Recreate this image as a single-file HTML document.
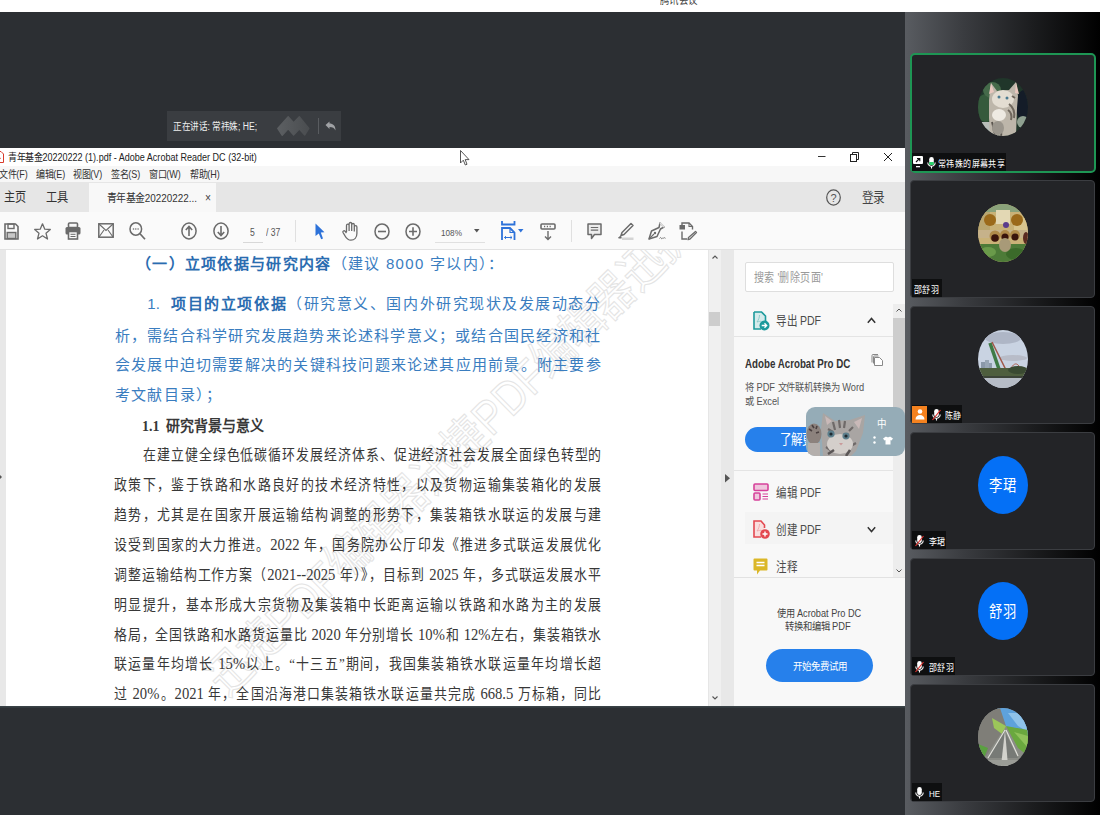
<!DOCTYPE html>
<html lang="zh-CN"><head><meta charset="utf-8">
<style>
*{margin:0;padding:0;box-sizing:border-box}
html,body{width:1101px;height:815px;overflow:hidden;background:#2c2f33;font-family:"Liberation Sans",sans-serif}
.a{position:absolute}
.t{position:absolute;white-space:nowrap;line-height:1;transform-origin:0 0}
.ln{position:absolute;white-space:nowrap;line-height:16px;text-align:justify;text-align-last:justify;transform-origin:0 0}
.dg{font-size:17px;line-height:0}
.bl{color:#3a7dbf;font-size:15px}
.bl b{color:#2a6cb0}
.bk{color:#383838;font-family:"Liberation Serif",serif;font-size:15px}
svg{position:absolute;overflow:visible}
</style></head><body>
<!-- top white bar -->
<div class="a" style="left:0;top:0;width:1101px;height:12px;background:#fff"></div>
<div class="t" style="left:660px;top:-5.5px;font-size:11px;color:#444;transform:scaleX(.86)">腾讯会议</div>

<!-- speaking badge -->
<div class="a" style="left:167px;top:111px;width:174px;height:30px;background:#3a3d41"></div>
<div class="t" style="left:173px;top:121.5px;font-size:10px;color:#eee;transform:scaleX(.86)">正在讲话: 常祎姝; HE;</div>
<svg style="left:272px;top:110px" width="40" height="30" viewBox="0 0 40 30"><defs><linearGradient id="lg" x1="0" x2="1" y1="0" y2="0"><stop offset="0" stop-color="#5c5f62"/><stop offset="1" stop-color="#4a4d50"/></linearGradient></defs><path d="M5.7 18.4 L16.2 6.7 L21.6 12.7 L27.3 6.7 L36.9 18.4 L32.7 25.1 L27.3 19.1 L21.6 25.1 L16.2 18.8 L10.2 25.4z" fill="url(#lg)" stroke="url(#lg)" stroke-width="1.2" stroke-linejoin="round"/></svg>
<div class="a" style="left:318px;top:118px;width:1px;height:16px;background:#595c60"></div>
<svg style="left:325px;top:121px" width="11" height="10" viewBox="0 0 11 10"><path d="M0.5 4L4.5 0.5V2.5C8 2.5 10.5 4.5 10.5 9.5C9.5 7 7.5 6 4.5 6V8z" fill="#a0a2a5"/></svg>

<!-- ACROBAT WINDOW -->
<div id="acro" class="a" style="left:0;top:148px;width:905px;height:558px;background:#fff;overflow:hidden">
<!-- title bar (y 148-166) -->
<div class="a" style="left:0;top:0;width:905px;height:18px;background:#fff"></div>
<svg style="left:-6px;top:3px" width="10" height="12" viewBox="0 0 10 12"><path d="M1 0.5h6l2.5 2.5v8.5h-8.5z" fill="#fff" stroke="#d83b2b" stroke-width="1"/><path d="M3 8c1-2 2-4 2-6M3 8c2-.5 3-1 4-.5" stroke="#d83b2b" stroke-width=".8" fill="none"/></svg>
<div class="t" style="left:8px;top:4px;font-size:10.5px;color:#222;transform:scaleX(.86)">青年基金20220222 (1).pdf - Adobe Acrobat Reader DC (32-bit)</div>
<svg style="left:818px;top:8px" width="8" height="2"><rect x="0" y="0" width="7.5" height="1" fill="#333"/></svg>
<svg style="left:850px;top:4px" width="9" height="10" viewBox="0 0 9 10"><rect x="0.5" y="2.5" width="6" height="7" fill="none" stroke="#222"/><path d="M2.5 2.5V0.5h6v7h-2" fill="none" stroke="#222"/></svg>
<svg style="left:883.5px;top:4.5px" width="8" height="8" viewBox="0 0 8 8"><path d="M0 0L8 8M8 0L0 8" stroke="#222" stroke-width="1"/></svg>
<!-- menu bar (166-182) -->
<div class="a" style="left:0;top:18px;width:905px;height:16px;background:#f7f7f7"></div>
<div class="t" style="left:-1px;top:21px;font-size:10.5px;color:#333;transform:scaleX(.86)">文件(F)</div>
<div class="t" style="left:36px;top:21px;font-size:10.5px;color:#333;transform:scaleX(.86)">编辑(E)</div>
<div class="t" style="left:73px;top:21px;font-size:10.5px;color:#333;transform:scaleX(.86)">视图(V)</div>
<div class="t" style="left:111px;top:21px;font-size:10.5px;color:#333;transform:scaleX(.86)">签名(S)</div>
<div class="t" style="left:149px;top:21px;font-size:10.5px;color:#333;transform:scaleX(.86)">窗口(W)</div>
<div class="t" style="left:190px;top:21px;font-size:10.5px;color:#333;transform:scaleX(.86)">帮助(H)</div>
<!-- tab bar (182-212) -->
<div class="a" style="left:0;top:34px;width:905px;height:30px;background:#e6e6e6"></div>
<div class="a" style="left:89px;top:35px;width:127px;height:29px;background:#f8f8f8"></div>
<div class="t" style="left:4px;top:41.5px;font-size:13px;color:#333;transform:scaleX(.86)">主页</div>
<div class="t" style="left:46px;top:41.5px;font-size:13px;color:#333;transform:scaleX(.86)">工具</div>
<div class="t" style="left:107px;top:44.5px;font-size:11.5px;color:#333;transform:scaleX(.86)">青年基金20220222...</div>
<div class="t" style="left:205px;top:44px;font-size:12px;color:#444;transform:scaleX(.86)">×</div>
<svg style="left:826px;top:41px" width="15" height="17" viewBox="0 0 15 17"><ellipse cx="7.5" cy="8.5" rx="6.8" ry="7.6" fill="none" stroke="#555" stroke-width="1.2"/><text x="7.5" y="12.5" font-size="11" text-anchor="middle" fill="#555" font-family="Liberation Sans">?</text></svg>
<div class="t" style="left:862px;top:43px;font-size:13.5px;color:#444;transform:scaleX(.86)">登录</div>
<!-- toolbar (212-250) -->
<div class="a" style="left:0;top:64px;width:905px;height:38px;background:#fafafa;border-bottom:1px solid #e2e2e2"></div>


<!-- doc area (y 250-706) -->
<div class="a" style="left:0;top:102px;width:6px;height:456px;background:#e8e8e8"></div>
<svg style="left:-1px;top:326px" width="4" height="6"><path d="M0 0L3 3L0 6z" fill="#555"/></svg>
<div class="a" style="left:6px;top:102px;width:702px;height:456px;background:#fff"></div>
<div class="a" style="left:708px;top:102px;width:12.5px;height:456px;background:#f0f0f0;border-left:1px solid #e6e6e6"></div>
<div class="a" style="left:709px;top:164px;width:11px;height:13.5px;background:#cdcdcd"></div>
<svg style="left:711.5px;top:107px" width="6" height="4"><path d="M0.5 3.5L3 1L5.5 3.5" fill="none" stroke="#555" stroke-width="1.1"/></svg>
<svg style="left:711.5px;top:548px" width="6" height="4"><path d="M0.5 0.5L3 3L5.5 0.5" fill="none" stroke="#555" stroke-width="1.1"/></svg>
<div class="a" style="left:720.5px;top:102px;width:13.5px;height:456px;background:#e8e8e8"></div>
<svg style="left:724.5px;top:325.5px" width="6" height="9"><path d="M0 0L5 4.3L0 8.6z" fill="#555"/></svg>
<div class="a" style="left:6px;top:102px;width:702px;height:456px;overflow:hidden"><div class="t" style="left:193px;top:420px;font-size:48px;color:transparent;-webkit-text-stroke:1.1px #e4e4e4;transform:rotate(-44.6deg) scaleX(.86);transform-origin:0 0">迅捷PDF编辑器迅捷PDF编辑器迅捷</div></div>
<div class="ln bl" style="left:136px;top:108.0px;text-align:left;text-align-last:left;letter-spacing:1.3px"><b>（一）立项依据与研究内容</b>（建议 8000 字以内）：</div>
<div class="ln bl" style="left:147.3px;top:148.0px;width:452.7px;">1.&nbsp; <b>项目的立项依据</b>（研究意义、国内外研究现状及发展动态分</div>
<div class="ln bl" style="left:114.8px;top:179.5px;width:485.2px;">析，需结合科学研究发展趋势来论述科学意义；或结合国民经济和社</div>
<div class="ln bl" style="left:114.8px;top:209.0px;width:485.8px;">会发展中迫切需要解决的关键科技问题来论述其应用前景。附主要参</div>
<div class="ln bl" style="left:114.8px;top:239.4px;text-align:left;text-align-last:left;letter-spacing:1.3px">考文献目录）；</div>
<div class="ln bk" style="left:142.2px;top:269.9px;text-align:left;text-align-last:left;font-weight:bold;transform:scaleX(.93)">1.1&nbsp; 研究背景与意义</div>
<div class="ln bk" style="left:142.6px;top:299.2px;width:533.0px;transform:scaleX(0.86);">在建立健全绿色低碳循环发展经济体系、促进经济社会发展全面绿色转型的</div>
<div class="ln bk" style="left:114px;top:329.1px;width:566.3px;transform:scaleX(0.86);">政策下，鉴于铁路和水路良好的技术经济特性，以及货物运输集装箱化的发展</div>
<div class="ln bk" style="left:114px;top:359.0px;width:566.3px;transform:scaleX(0.86);">趋势，尤其是在国家开展运输结构调整的形势下，集装箱铁水联运的发展与建</div>
<div class="ln bk" style="left:114px;top:388.9px;width:566.3px;transform:scaleX(0.86);">设受到国家的大力推进。<span class="dg">2022</span> 年，国务院办公厅印发《推进多式联运发展优化</div>
<div class="ln bk" style="left:114px;top:418.8px;width:566.3px;transform:scaleX(0.86);">调整运输结构工作方案（<span class="dg">2021--2025</span> 年）》，目标到 <span class="dg">2025</span> 年，多式联运发展水平</div>
<div class="ln bk" style="left:114px;top:448.6px;width:566.3px;transform:scaleX(0.86);">明显提升，基本形成大宗货物及集装箱中长距离运输以铁路和水路为主的发展</div>
<div class="ln bk" style="left:114px;top:478.5px;width:566.3px;transform:scaleX(0.86);">格局，全国铁路和水路货运量比 <span class="dg">2020</span> 年分别增长 <span class="dg">10%</span>和 <span class="dg">12%</span>左右，集装箱铁水</div>
<div class="ln bk" style="left:114px;top:508.4px;width:566.3px;transform:scaleX(0.86);">联运量年均增长 <span class="dg">15%</span>以上。“十三五”期间，我国集装箱铁水联运量年均增长超</div>
<div class="ln bk" style="left:114px;top:538.3px;width:566.3px;transform:scaleX(0.86);">过 <span class="dg">20%</span>。<span class="dg">2021</span> 年，全国沿海港口集装箱铁水联运量共完成 <span class="dg">668.5</span> 万标箱，同比</div>

<!-- right pane -->
<div class="a" style="left:734px;top:102px;width:171px;height:456px;background:#f8f8f8"></div>
<div class="a" style="left:744.5px;top:114.4px;width:149.5px;height:29.5px;background:#fff;border:1px solid #dedede;border-radius:2px"></div>
<div class="t" style="left:754px;top:123.5px;font-size:12.5px;color:#9a9a9a;transform:scaleX(.80)">搜索 '删除页面'</div>
<svg style="left:752.5px;top:162.5px" width="17" height="20" viewBox="0 0 17 20"><path d="M1 1h7.5l4 4v8L8 18H1z" fill="#d5ebeb"/><path d="M1 1h7.5l4 4v5.5" fill="none" stroke="#1d9a9c" stroke-width="1.6"/><path d="M1 1v17h7" fill="none" stroke="#1d9a9c" stroke-width="1.6"/><path d="M4 11c1.5-2 2.5-4.5 2.5-7M4 11c2-.5 3.5-1 4.5-.5" fill="none" stroke="#7cc4c4" stroke-width=".8"/><circle cx="11.5" cy="14.5" r="5" fill="#1d9a9c"/><path d="M8.7 14.5h4.5M11.5 12.3l2.2 2.2l-2.2 2.2" fill="none" stroke="#fff" stroke-width="1.3"/></svg>
<div class="t" style="left:776px;top:165.5px;font-size:13px;color:#4b4b4b;transform:scaleX(.81)">导出 PDF</div>
<svg style="left:867px;top:168.5px" width="9" height="7"><path d="M0.8 5.8L4.5 1.5L8.2 5.8" fill="none" stroke="#333" stroke-width="1.5"/></svg>
<div class="a" style="left:734px;top:188.0px;width:159px;height:1px;background:#e4e4e4"></div>
<div class="a" style="left:893px;top:156.0px;width:11.5px;height:273px;background:#ededed"></div>
<div class="a" style="left:893px;top:170.0px;width:11.5px;height:112px;background:#cdcdcd"></div>
<svg style="left:896px;top:160.0px" width="6" height="4"><path d="M0.5 3.5L3 1L5.5 3.5" fill="none" stroke="#555" stroke-width="1"/></svg>
<svg style="left:896px;top:420.5px" width="6" height="4"><path d="M0.5 0.5L3 3L5.5 0.5" fill="none" stroke="#555" stroke-width="1"/></svg>
<div class="t" style="left:745px;top:210.0px;font-size:12.5px;font-weight:bold;color:#333;transform:scaleX(.78)">Adobe Acrobat Pro DC</div>
<svg style="left:871px;top:206.0px" width="12" height="12" viewBox="0 0 12 12"><path d="M3.5 3.5h5l3 3v5h-8z" fill="#fff" stroke="#888" stroke-width="1"/><path d="M1 8.5V1.5a1 1 0 0 1 1-1h5" fill="none" stroke="#888" stroke-width="1"/><path d="M2.5 9.5V3a1 1 0 0 1 1-1h4" fill="none" stroke="#888" stroke-width="1"/></svg>
<div class="t" style="left:745px;top:234.0px;font-size:10.5px;color:#555;transform:scaleX(.885)">将 PDF 文件联机转换为 Word</div>
<div class="t" style="left:745px;top:248.0px;font-size:10.5px;color:#555;transform:scaleX(.885)">或 Excel</div>
<div class="a" style="left:744.5px;top:279.2px;width:122px;height:24.7px;background:#2680eb;border-radius:13px"></div>
<div class="t" style="left:779.5px;top:285.0px;font-size:13.5px;color:#fff;transform:scaleX(.86)">了解更多</div>
<div class="a" style="left:734px;top:322.0px;width:159px;height:1px;background:#e4e4e4"></div>
<svg style="left:752.5px;top:334.8px" width="16" height="18" viewBox="0 0 16 18"><rect x="1" y="1" width="14" height="6.5" rx="1" fill="#efc6dd" stroke="#d6419a" stroke-width="1.6"/><rect x="1" y="10" width="6" height="7" rx="1" fill="#efc6dd" stroke="#d6419a" stroke-width="1.6"/><path d="M9.5 11h5.5M9.5 13.5h5.5M9.5 16h5.5" stroke="#d6419a" stroke-width="1"/></svg>
<div class="t" style="left:776px;top:338.0px;font-size:13px;color:#4b4b4b;transform:scaleX(.81)">编辑 PDF</div>
<div class="a" style="left:745px;top:364.0px;width:148px;height:31.5px;background:#f4f4f4"></div>
<svg style="left:752.5px;top:371.5px" width="17" height="19" viewBox="0 0 17 19"><path d="M11.5 8V5L8 1H1v16h7z" fill="#f9dede"/><path d="M11.5 8V5L8 1H1v16h7" fill="none" stroke="#e34850" stroke-width="1.6"/><path d="M4 11c1.5-2 2.5-4.5 2.5-7M4 11c2-.5 3.5-1 4.5-.5" fill="none" stroke="#f0a0a5" stroke-width=".8"/><circle cx="12" cy="14" r="4.8" fill="#e34850"/><path d="M9.5 14h5M12 11.5v5" stroke="#fff" stroke-width="1.4"/></svg>
<div class="t" style="left:776px;top:375.0px;font-size:13px;color:#4b4b4b;transform:scaleX(.81)">创建 PDF</div>
<svg style="left:867px;top:378.0px" width="9" height="7"><path d="M0.8 1.2L4.5 5.5L8.2 1.2" fill="none" stroke="#333" stroke-width="1.5"/></svg>
<svg style="left:753px;top:409.8px" width="15" height="17" viewBox="0 0 15 17"><path d="M1.5 0.5h12a1 1 0 0 1 1 1v10a1 1 0 0 1-1 1H7L4 16.5V12.5H1.5a1 1 0 0 1-1-1v-10a1 1 0 0 1 1-1z" fill="#dbb728"/><path d="M3.5 4.5h8M3.5 7.5h8" stroke="#fff" stroke-width="1.4"/></svg>
<div class="t" style="left:776px;top:411.5px;font-size:13px;color:#4b4b4b;transform:scaleX(.81)">注释</div>
<div class="a" style="left:734px;top:429.0px;width:171px;height:1px;background:#e2e2e2"></div>
<div class="t" style="left:777px;top:460.0px;font-size:10.5px;color:#444;transform:scaleX(0.873)">使用 Acrobat Pro DC</div>
<div class="t" style="left:785px;top:473.0px;font-size:10.5px;color:#444;transform:scaleX(0.889)">转换和编辑 PDF</div>
<div class="a" style="left:766px;top:500.8px;width:107px;height:33px;background:#2680eb;border-radius:17px"></div>
<div class="t" style="left:792.5px;top:512.5px;font-size:10.5px;color:#fff;transform:scaleX(0.904)">开始免费试用</div>
<!-- IME widget -->
<div class="a" style="left:806px;top:259px;width:98.5px;height:49px;background:#95acb7;border-radius:9px;overflow:hidden">
<svg style="left:0;top:0" width="98" height="49" viewBox="0 0 98 49">
<path d="M17 49L15 22L17 6L29 14L44 13L59 8L57 26L50 44L45 49z" fill="#a9a5a3"/>
<path d="M19 9L21 18L26 14z M56 11L53 22L48 15z" fill="#c9b9b8"/>
<path d="M27 15l2 8M33 13l1 8M39 14l-1 7M22 22l5 3M47 20l-4 4M20 40l6 4M50 36l-5 3" stroke="#6f6a69" stroke-width="2.2" fill="none"/>
<ellipse cx="34" cy="37" rx="13" ry="10" fill="#d4cfcb"/>
<ellipse cx="25" cy="27" rx="3.6" ry="3.4" fill="#5d7f8c"/><ellipse cx="40" cy="29" rx="3.6" ry="3.4" fill="#5d7f8c"/>
<circle cx="25" cy="27" r="1.6" fill="#1e2a30"/><circle cx="40" cy="29" r="1.6" fill="#1e2a30"/>
<path d="M33 36l4 0l-2 2.5z" fill="#c99a9a"/>
<path d="M22 47l6-4M40 49l4-6" stroke="#5a5656" stroke-width="2.5"/>
<ellipse cx="8" cy="27" rx="7.5" ry="10.5" fill="#8c827d"/>
<path d="M3 22l3 2M6 18l2 3M11 19l-1 3M13 25l-3 1" stroke="#4a4040" stroke-width="1.6"/>
<rect x="2" y="36" width="12" height="13" fill="#b4afac"/>
</svg>
</div>
<div class="t" style="left:876.5px;top:271.0px;font-size:11px;color:#fff;transform:scaleX(.86)">中</div>
<svg style="left:873px;top:288.0px" width="4" height="9"><circle cx="1.5" cy="1.5" r="1.2" fill="#fff"/><circle cx="1.5" cy="6.5" r="1.2" fill="#fff"/></svg>
<svg style="left:883px;top:288.0px" width="10" height="9" viewBox="0 0 10 9"><path d="M3 0.5L0 2.5l1.5 2L2.5 4v4.5h5V4l1 .5L10 2.5L7 0.5C6.5 1.5 3.5 1.5 3 .5z" fill="#fff"/></svg>
<!-- cursor -->
<svg style="left:459.8px;top:2px" width="10" height="16" viewBox="0 0 10 16"><path d="M0.5 0.5V13L3.3 10.2L5.3 15L7 14.3L5.2 9.6H9z" fill="#fff" stroke="#444" stroke-width=".9" stroke-linejoin="round"/></svg>
<!-- toolbar icons -->
<svg style="left:4px;top:74.5px" width="15" height="17" viewBox="0 0 15 17"><path d="M1 1h10.5l2.5 2.5v12.5h-13z" fill="none" stroke="#6b6b6b" stroke-width="1.6"/><rect x="4" y="1" width="6" height="4.5" fill="none" stroke="#6b6b6b" stroke-width="1.4"/><rect x="3.2" y="9.5" width="8.6" height="6" fill="#c8c8c8" stroke="#6b6b6b" stroke-width="1.4"/></svg>
<svg style="left:34px;top:74.5px" width="17" height="17" viewBox="0 0 17 17"><path d="M8.5 0.8L10.8 6.2L16.3 6.5L12 10.2L13.5 16L8.5 12.8L3.5 16L5 10.2L0.7 6.5L6.2 6.2Z" fill="none" stroke="#6b6b6b" stroke-width="1.3" stroke-linejoin="round"/></svg>
<svg style="left:65px;top:74px" width="16" height="18" viewBox="0 0 16 18"><rect x="3.5" y="1" width="9" height="4.5" rx="1" fill="none" stroke="#6b6b6b" stroke-width="1.6"/><rect x="0.5" y="5" width="15" height="7.5" rx="1.5" fill="#6b6b6b"/><rect x="3.5" y="9.5" width="9" height="7.5" fill="#fafafa" stroke="#6b6b6b" stroke-width="1.6"/><path d="M5.5 12.3h5M5.5 14.5h5" stroke="#6b6b6b" stroke-width="1"/></svg>
<svg style="left:97.5px;top:75px" width="16" height="15" viewBox="0 0 16 15"><rect x="0.8" y="0.8" width="14.4" height="13.4" fill="none" stroke="#6b6b6b" stroke-width="1.5"/><path d="M1 1L8 7.5L15 1M1 14L6 7M15 14L10 7" fill="none" stroke="#6b6b6b" stroke-width="1.1"/></svg>
<svg style="left:128.5px;top:74px" width="17" height="18" viewBox="0 0 17 18"><ellipse cx="6.8" cy="7" rx="5.8" ry="6.2" fill="none" stroke="#6b6b6b" stroke-width="1.5"/><path d="M11 11.8L16 17.3" stroke="#6b6b6b" stroke-width="1.7"/><circle cx="4.5" cy="7" r=".8" fill="#6b6b6b"/><circle cx="6.8" cy="7" r=".8" fill="#6b6b6b"/><circle cx="9.1" cy="7" r=".8" fill="#6b6b6b"/></svg>
<svg style="left:181px;top:74px" width="16" height="18" viewBox="0 0 16 18"><ellipse cx="8" cy="9" rx="7.1" ry="7.9" fill="none" stroke="#6b6b6b" stroke-width="1.5"/><path d="M8 14V4.5M4.8 8L8 4.5L11.2 8" fill="none" stroke="#6b6b6b" stroke-width="1.6"/></svg>
<svg style="left:212.5px;top:74px" width="16" height="18" viewBox="0 0 16 18"><ellipse cx="8" cy="9" rx="7.1" ry="7.9" fill="none" stroke="#6b6b6b" stroke-width="1.5"/><path d="M8 4V13.5M4.8 10L8 13.5L11.2 10" fill="none" stroke="#6b6b6b" stroke-width="1.6"/></svg>
<div class="t" style="left:250px;top:79.5px;font-size:10px;color:#555;transform:scaleX(.86)">5</div>
<div class="a" style="left:243px;top:94px;width:20px;height:1px;background:#d8d8d8"></div>
<div class="t" style="left:266px;top:79.5px;font-size:10px;color:#555;transform:scaleX(.86)">/ 37</div>
<div class="a" style="left:295px;top:72px;width:1px;height:22px;background:#e0e0e0"></div>
<svg style="left:315px;top:74.5px" width="10" height="17" viewBox="0 0 10 17"><path d="M0.5 0.5L9.5 9.2L5.8 9.5L8 15.5L6.2 16.3L3.8 10.5L0.5 13z" fill="#2d72d9"/></svg>
<svg style="left:342px;top:74px" width="17" height="19" viewBox="0 0 17 19"><path d="M4.5 10V3.5a1.3 1.3 0 0 1 2.6 0V9M7.1 9V1.8a1.3 1.3 0 0 1 2.6 0V9M9.7 9V2.8a1.3 1.3 0 0 1 2.6 0V9.5M12.3 9.5V5a1.3 1.3 0 0 1 2.6 0v6.5c0 4-2.5 6.7-6 6.7c-3 0-4.5-1.8-6-4.5L1 10.5a1.2 1.2 0 0 1 2-1.3L4.5 11" fill="none" stroke="#6b6b6b" stroke-width="1.3" stroke-linejoin="round"/></svg>
<svg style="left:373.5px;top:74.5px" width="16" height="17" viewBox="0 0 16 17"><ellipse cx="8" cy="8.5" rx="7" ry="7.6" fill="none" stroke="#6b6b6b" stroke-width="1.5"/><path d="M4 8.5h8" stroke="#6b6b6b" stroke-width="1.6"/></svg>
<svg style="left:405px;top:74.5px" width="16" height="17" viewBox="0 0 16 17"><ellipse cx="8" cy="8.5" rx="7" ry="7.6" fill="none" stroke="#6b6b6b" stroke-width="1.5"/><path d="M4 8.5h8M8 4.3v8.4" stroke="#6b6b6b" stroke-width="1.6"/></svg>
<div class="t" style="left:441px;top:80px;font-size:9.5px;color:#555;transform:scaleX(.86)">108%</div>
<svg style="left:474px;top:81px" width="6" height="4"><path d="M0 0h5.5L2.75 3.5z" fill="#555"/></svg>
<div class="a" style="left:435px;top:94px;width:50px;height:1px;background:#e0e0e0"></div>
<svg style="left:500.5px;top:73px" width="15" height="20" viewBox="0 0 15 20"><path d="M1 0v3.5h12.5V0" fill="none" stroke="#2d72d9" stroke-width="1.8"/><path d="M1 19V7h8l4.5 4.5V19" fill="none" stroke="#2d72d9" stroke-width="1.8"/><path d="M9 7v4.5h4.5" fill="none" stroke="#2d72d9" stroke-width="1.2"/><path d="M3.5 16.5h7.5M3.5 16.5l1.5-1.3M3.5 16.5l1.5 1.3M11 16.5l-1.5-1.3M11 16.5l-1.5 1.3" stroke="#2d72d9" stroke-width="1"/></svg>
<svg style="left:518px;top:81px" width="6" height="4"><path d="M0 0h5.5L2.75 3.5z" fill="#2d72d9"/></svg>
<svg style="left:539.5px;top:74.5px" width="16" height="18" viewBox="0 0 16 18"><rect x="1" y="1" width="14" height="5" rx="1" fill="none" stroke="#6b6b6b" stroke-width="1.6"/><path d="M4 3.5h1.2M6.8 3.5h1.2M9.6 3.5h1.2" stroke="#6b6b6b" stroke-width="1.4"/><path d="M8 8v8.5M5 13.5L8 16.5L11 13.5" fill="none" stroke="#6b6b6b" stroke-width="1.4"/></svg>
<div class="a" style="left:570.5px;top:72px;width:1px;height:22px;background:#e0e0e0"></div>
<svg style="left:586.5px;top:75px" width="15" height="17" viewBox="0 0 15 17"><path d="M1 1h13v10.5H7.5L4.5 15.5V11.5H1z" fill="#ececec" stroke="#6b6b6b" stroke-width="1.5" stroke-linejoin="round"/><path d="M3.8 4.5h7.4M3.8 7.2h7.4" stroke="#6b6b6b" stroke-width="1.2"/></svg>
<svg style="left:617px;top:74px" width="17" height="18" viewBox="0 0 17 18"><path d="M14 1.5l2 2L7 12.5l-3 1l1-3z" fill="none" stroke="#6b6b6b" stroke-width="1.5" stroke-linejoin="round"/><path d="M4 13.5l-2.5 2.5h3" fill="#6b6b6b" stroke="#6b6b6b" stroke-width="1"/><rect x="5" y="15.5" width="11.5" height="2.5" fill="#d4d4d4"/></svg>
<svg style="left:648px;top:74px" width="18" height="18" viewBox="0 0 18 18"><path d="M12 1l4 4l-3.5 2L9 14.5L1 17L3.5 9L11 5.5z" fill="none" stroke="#6b6b6b" stroke-width="1.5" stroke-linejoin="round"/><path d="M1 17l5-5" stroke="#6b6b6b" stroke-width="1.1"/><circle cx="7" cy="11" r="1.2" fill="#6b6b6b"/><path d="M11.5 16.5c1-1.5 1.5-1 2 0c.5 1 1-.5 1.5-1M15.5 16.5c.5-1 1-1 2-.2" fill="none" stroke="#6b6b6b" stroke-width=".9"/><path d="M12 1l4 4" stroke="#dcdcdc" stroke-width="1.8"/></svg>
<svg style="left:679px;top:74px" width="18" height="18" viewBox="0 0 18 18"><rect x="0.5" y="3" width="5.5" height="4.5" fill="#6b6b6b"/><path d="M3 3V1h7l3.5 3.5v3" fill="none" stroke="#6b6b6b" stroke-width="1.4"/><path d="M10 1v3.5h3.5" fill="none" stroke="#6b6b6b" stroke-width="1.1"/><path d="M3 9.5v7.5h5" fill="none" stroke="#6b6b6b" stroke-width="1.4"/><path d="M16.5 9.5l1 1L11 17l-2 .5l.5-2z" fill="none" stroke="#6b6b6b" stroke-width="1.3" stroke-linejoin="round"/></svg>
</div>

<div class="a" style="left:0;top:706px;width:905px;height:2px;background:linear-gradient(#3d464b,#30363a)"></div>
<!-- RIGHT PANEL -->
<div id="panel" class="a" style="left:905px;top:12px;width:195px;height:803px;background:linear-gradient(90deg,#595c61 0%,#3a3c40 30%,#1c1d1f 65%,#000 100%)"></div>
<!-- tiles -->
<div class="a" style="left:909.5px;top:53px;width:186px;height:119.5px;background:#232427;border:2px solid #1e9654;border-radius:5px"></div>
<div class="a" style="left:977.5px;top:78.3px;width:50px;height:58px;border-radius:50%;overflow:hidden"><svg style="left:0;top:0" width="50" height="58" viewBox="0 0 50 58" preserveAspectRatio="none"><rect width="50" height="58" fill="#20362a"/><ellipse cx="8" cy="30" rx="10" ry="14" fill="#355a3c"/><ellipse cx="14" cy="12" rx="9" ry="8" fill="#456a4a"/><ellipse cx="46" cy="28" rx="8" ry="16" fill="#141c28"/><ellipse cx="45" cy="44" rx="6" ry="6" fill="#8fa090"/><rect x="0" y="44" width="20" height="14" fill="#b9bdba"/>
<path d="M13 5L19 13L31 12L38 4L40 18L39 30L38 58H12L11 40L11 22z" fill="#bdb6aa"/><ellipse cx="25" cy="21" rx="11" ry="9" fill="#e3ddd2"/><path d="M31 26c4 3 6 8 5 14M30 32c3 2 4 6 3 10M34 18l3 2" stroke="#6e665c" stroke-width="2" fill="none"/>
<ellipse cx="21" cy="37" rx="7" ry="6" fill="#eeeae2"/><path d="M14 44c2 6 1 10 4 14M22 46c0 5 2 8 1 12" stroke="#5a554e" stroke-width="2" fill="none"/><ellipse cx="20" cy="50" rx="6" ry="7" fill="#9a958c"/><circle cx="21" cy="19" r="1.5" fill="#4a7a90"/><circle cx="29" cy="20" r="1.5" fill="#4a7a90"/><path d="M13 5l3 9l-5 2z M38 4l-1 11l4 1z" fill="#e9c8bf"/></svg></div>
<div class="a" style="left:912px;top:153px;width:94px;height:18px;background:#0e0f10"></div>
<svg style="left:912.8px;top:156px" width="10" height="12" viewBox="0 0 10 12"><rect x="0" y="0" width="10" height="8" rx="1" fill="#fff"/><path d="M3 6l3.5-3.5M4 2.5h2.8v2.8" stroke="#111" stroke-width="1.1" fill="none"/><rect x="3" y="10" width="4" height="1.3" fill="#fff"/></svg>
<svg style="left:927px;top:156.5px" width="9" height="12" viewBox="0 0 9 12"><rect x="2.2" y="0" width="4.6" height="8" rx="2.3" fill="#fff"/><rect x="2.2" y="5" width="4.6" height="3" fill="#2bd26b"/><path d="M0.8 5.5a3.7 3.7 0 0 0 7.4 0M4.5 9.3V11.5" stroke="#fff" stroke-width="1.1" fill="none"/></svg>
<div class="t" style="left:938px;top:158.5px;font-size:9.5px;color:#fff;transform:scaleX(.84)">常祎姝的屏幕共享</div>
<div class="a" style="left:910px;top:180px;width:185px;height:118px;background:#232427;border:1px solid #3b3d41;border-radius:4px"></div>
<div class="a" style="left:977.5px;top:204.3px;width:50px;height:58px;border-radius:50%;overflow:hidden"><svg style="left:0;top:0" width="50" height="58" viewBox="0 0 50 58" preserveAspectRatio="none"><rect width="50" height="58" fill="#c9b277"/><rect width="50" height="8" fill="#8aa27a"/><rect x="0" y="8" width="12" height="20" fill="#b9a670"/><rect x="18" y="6" width="14" height="14" fill="#e3d8b4"/><rect x="36" y="14" width="14" height="20" fill="#d8c58e"/><circle cx="12" cy="16" r="6" fill="#9b6a1a"/><circle cx="39" cy="16" r="6" fill="#9b6a1a"/><circle cx="28" cy="21" r="3" fill="#5a3c8c"/>
<rect x="0" y="26" width="50" height="8" fill="#c6b28a"/><circle cx="17" cy="32" r="5.5" fill="#b08a4a"/><circle cx="27" cy="31" r="5" fill="#b08a4a"/><circle cx="37" cy="31" r="5" fill="#b08a4a"/><circle cx="17" cy="34" r="3.8" fill="#3a140c"/><circle cx="27" cy="33" r="3.5" fill="#3a140c"/><circle cx="37" cy="33" r="3.5" fill="#3a140c"/>
<rect x="0" y="40" width="50" height="18" fill="#4d7b38"/><ellipse cx="10" cy="48" rx="8" ry="5" fill="#6a9a4a"/><ellipse cx="38" cy="50" rx="10" ry="6" fill="#3b6a2a"/><ellipse cx="27" cy="41" rx="6" ry="7" fill="#a89a78"/><ellipse cx="48" cy="34" rx="3" ry="6" fill="#5a2a20"/></svg></div>
<div class="a" style="left:912px;top:279px;width:29.7px;height:18px;background:#0e0f10"></div>
<div class="t" style="left:914px;top:284.5px;font-size:9.5px;color:#fff;transform:scaleX(.84)">邵舒羽</div>
<div class="a" style="left:910px;top:306px;width:185px;height:118px;background:#232427;border:1px solid #3b3d41;border-radius:4px"></div>
<div class="a" style="left:977.5px;top:330.3px;width:50px;height:58px;border-radius:50%;overflow:hidden"><svg style="left:0;top:0" width="50" height="58" viewBox="0 0 50 58" preserveAspectRatio="none"><rect width="50" height="58" fill="#c9d3e2"/><ellipse cx="25" cy="8" rx="18" ry="6" fill="#aeb6c6"/><ellipse cx="35" cy="28" rx="14" ry="3" fill="#b8bcc8"/><rect x="3" y="32" width="4" height="8" fill="#8a98a8"/><rect x="7" y="30" width="4" height="10" fill="#98a6b4"/><rect x="11" y="33" width="3" height="7" fill="#8d9bab"/>
<path d="M12 13L23 45" stroke="#3f7a45" stroke-width="3.5"/><path d="M14 12L29 42" stroke="#a0584a" stroke-width="1.5"/><path d="M32 40c3-6 6-8 9-4M35 38l2 4" stroke="#b06050" stroke-width="1" fill="none"/>
<rect x="0" y="38" width="50" height="10" fill="#4e5e3e"/><ellipse cx="40" cy="40" rx="10" ry="4" fill="#3a4a32"/><rect x="0" y="47" width="50" height="11" fill="#b6bcc6"/><rect x="0" y="46" width="50" height="2" fill="#3c4438"/></svg></div>
<div class="a" style="left:912px;top:405px;width:50.4px;height:18px;background:#0e0f10"></div>
<div class="a" style="left:912.3px;top:405.5px;width:14.7px;height:17px;background:#f5821f"></div>
<svg style="left:913.5px;top:408px" width="12" height="12" viewBox="0 0 12 12"><circle cx="6" cy="3.5" r="2.3" fill="#fff"/><path d="M1.5 11.5c0-3 2-4.5 4.5-4.5s4.5 1.5 4.5 4.5z" fill="#fff"/></svg>
<svg style="left:931.8px;top:408.5px" width="9" height="12" viewBox="0 0 9 12"><rect x="2.2" y="0" width="4.6" height="8" rx="2.3" fill="#fff"/><path d="M0.8 5.5a3.7 3.7 0 0 0 7.4 0M4.5 9.3V11.5" stroke="#fff" stroke-width="1.1" fill="none"/><path d="M0.5 11L8.5 1" stroke="#e0302c" stroke-width="1.2"/></svg>
<div class="t" style="left:944.5px;top:410.5px;font-size:9.5px;color:#fff;transform:scaleX(.84)">陈静</div>
<div class="a" style="left:910px;top:432px;width:185px;height:118px;background:#232427;border:1px solid #3b3d41;border-radius:4px"></div>
<div class="a" style="left:977.5px;top:456.3px;width:50px;height:58px;border-radius:50%;background:#0470f6"></div>
<div class="t" style="left:1004.5px;top:478.4px;font-size:15.5px;color:#fff;transform:translateX(-50%) scaleX(.86);transform-origin:0 0">李珺</div>
<div class="a" style="left:912px;top:531px;width:34.2px;height:18px;background:#0e0f10"></div>
<svg style="left:914.5px;top:534.5px" width="9" height="12" viewBox="0 0 9 12"><rect x="2.2" y="0" width="4.6" height="8" rx="2.3" fill="#fff"/><path d="M0.8 5.5a3.7 3.7 0 0 0 7.4 0M4.5 9.3V11.5" stroke="#fff" stroke-width="1.1" fill="none"/><path d="M0.5 11L8.5 1" stroke="#e0302c" stroke-width="1.2"/></svg>
<div class="t" style="left:929px;top:536.5px;font-size:9.5px;color:#fff;transform:scaleX(.84)">李珺</div>
<div class="a" style="left:910px;top:558px;width:185px;height:118px;background:#232427;border:1px solid #3b3d41;border-radius:4px"></div>
<div class="a" style="left:977.5px;top:582.3px;width:50px;height:58px;border-radius:50%;background:#0470f6"></div>
<div class="t" style="left:1004.5px;top:604.4px;font-size:15.5px;color:#fff;transform:translateX(-50%) scaleX(.86);transform-origin:0 0">舒羽</div>
<div class="a" style="left:912px;top:657px;width:42.5px;height:18px;background:#0e0f10"></div>
<svg style="left:914.5px;top:660.5px" width="9" height="12" viewBox="0 0 9 12"><rect x="2.2" y="0" width="4.6" height="8" rx="2.3" fill="#fff"/><path d="M0.8 5.5a3.7 3.7 0 0 0 7.4 0M4.5 9.3V11.5" stroke="#fff" stroke-width="1.1" fill="none"/><path d="M0.5 11L8.5 1" stroke="#e0302c" stroke-width="1.2"/></svg>
<div class="t" style="left:929px;top:662.5px;font-size:9.5px;color:#fff;transform:scaleX(.84)">邵舒羽</div>
<div class="a" style="left:910px;top:684px;width:185px;height:118px;background:#232427;border:1px solid #3b3d41;border-radius:4px"></div>
<div class="a" style="left:977.5px;top:708.3px;width:50px;height:58px;border-radius:50%;overflow:hidden"><svg style="left:0;top:0" width="50" height="58" viewBox="0 0 50 58" preserveAspectRatio="none"><rect width="50" height="58" fill="#8a8c86"/><path d="M18 0H50V30L36 20L25 18z" fill="#5ea2dc"/><path d="M30 5H50V24L40 18z" fill="#8fc3ea"/><path d="M0 0H22L28 18L20 30L8 48L0 44z" fill="#7f7e78"/><path d="M14 10L28 18L24 26L16 20z" fill="#9cc65a"/><path d="M0 36L10 40L6 50L0 48z" fill="#5aa040"/><path d="M28 18L50 22V48L40 40z" fill="#6aa83e"/><path d="M36 24L50 28V40z" fill="#8fc25a"/>
<path d="M10 50L26 22L40 50z" fill="#777a76"/><path d="M23 58L27 22L30 58z" fill="#d2d2cc"/><path d="M10 50L27 22M40 48L28 22" stroke="#e0e0da" stroke-width="1.2"/><rect x="0" y="52" width="50" height="6" fill="#9a9c96"/></svg></div>
<div class="a" style="left:912px;top:783px;width:29.7px;height:18px;background:#0e0f10"></div>
<svg style="left:914.5px;top:786.5px" width="9" height="12" viewBox="0 0 9 12"><rect x="2.2" y="0" width="4.6" height="8" rx="2.3" fill="#fff"/><path d="M0.8 5.5a3.7 3.7 0 0 0 7.4 0M4.5 9.3V11.5" stroke="#fff" stroke-width="1.1" fill="none"/></svg>
<div class="t" style="left:929px;top:788.5px;font-size:9.5px;color:#fff;transform:scaleX(.84)">HE</div>
<div class="a" style="left:1100px;top:0;width:1px;height:815px;background:#fff"></div>
</body></html>
